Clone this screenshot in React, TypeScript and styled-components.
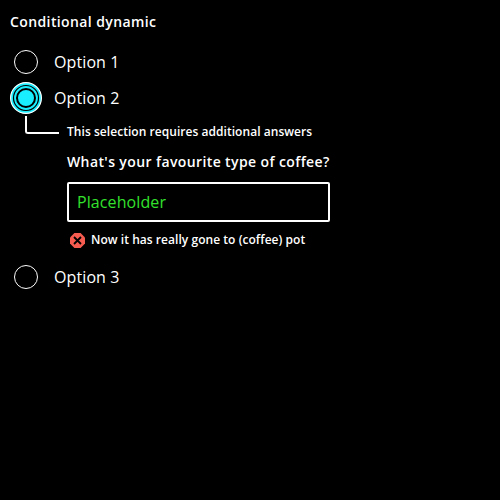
import React from "react";
import styled, { createGlobalStyle } from "styled-components";

const GlobalStyle = createGlobalStyle`
  html, body { margin: 0; background: #000; color: #fff; }
  * { box-sizing: border-box; }
  body { font-family: "Open Sans", sans-serif; }
`;

const Fieldset = styled.fieldset`
  border: 0;
  margin: 0;
  padding: 10px;
`;

const Legend = styled.legend`
  float: left;
  width: 100%;
  padding: 0;
  margin-bottom: 12px;
  font-size: 14px;
  line-height: 24px;
  font-weight: 600;
  letter-spacing: 0.39px;
`;

const Option = styled.label`
  display: flex;
  clear: both;
  align-items: center;
  gap: 12px;
  height: 32px;
  margin-bottom: 4px;
  font-size: 16px;
  line-height: 24px;
  letter-spacing: 0.1px;
`;

const RadioIcon = styled.svg`
  display: block;
  width: 32px;
  height: 32px;
`;

const Conditional = styled.div`
  display: flex;
  margin-bottom: 11px;
`;

const Branch = styled.div`
  width: 34px;
  height: 18px;
  margin-left: 15px;
  margin-top: -2px;
  border: solid #fff;
  border-width: 0 0 2px 2px;
  border-bottom-left-radius: 3px;
`;

const Content = styled.div`
  width: 263px;
  margin-left: 8px;
`;

const Hint = styled.div`
  margin-top: 4px;
  font-size: 12px;
  line-height: 20px;
  font-weight: 600;
  letter-spacing: 0.045px;
`;

const Question = styled.label`
  display: block;
  margin: 8px 0;
  font-size: 14px;
  line-height: 24px;
  font-weight: 600;
  letter-spacing: 0.39px;
  white-space: nowrap;
`;

const TextInput = styled.input`
  display: block;
  width: 100%;
  height: 40px;
  padding: 0 8px;
  border: 2px solid #fff;
  border-radius: 2px;
  background: #000;
  color: #fff;
  font: 16px/24px "Open Sans", sans-serif;
  letter-spacing: 0.1px;
  &::placeholder { color: #33e12d; opacity: 1; }
`;

const ErrorText = styled.div`
  display: flex;
  align-items: center;
  gap: 6px;
  margin: 8px 0 0 3px;
  font-size: 12px;
  line-height: 20px;
  font-weight: 600;
  letter-spacing: 0.045px;
`;

function Radio({ label, checked = false }: { label: string; checked?: boolean }) {
  return (
    <Option>
      <RadioIcon viewBox="0 0 32 32">
        {checked ? (
          <>
            <circle cx="16" cy="16" r="15.4" fill="#19eeff" stroke="#fff" strokeWidth="1.2" />
            <circle cx="16" cy="16" r="12.5" fill="#19eeff" stroke="#000" strokeWidth="1.2" />
            <circle cx="16" cy="16" r="9" fill="#19eeff" stroke="#000" strokeWidth="2" />
          </>
        ) : (
          <circle cx="16" cy="16" r="11.5" fill="#000" stroke="#fff" />
        )}
      </RadioIcon>
      {label}
    </Option>
  );
}

export default function App() {
  return (
    <>
      <GlobalStyle />
      <Fieldset>
        <Legend>Conditional dynamic</Legend>
        <Radio label="Option 1" />
        <Radio label="Option 2" checked />
        <Conditional>
          <Branch />
          <Content>
            <Hint>This selection requires additional answers</Hint>
            <Question htmlFor="coffee">What's your favourite type of coffee?</Question>
            <TextInput id="coffee" placeholder="Placeholder" />
            <ErrorText>
              <svg width="15" height="15" viewBox="0 0 15 15">
                <path d="M4.4 0h6.2L15 4.4v6.2L10.6 15H4.4L0 10.6V4.4z" fill="#f65b50" />
                <path d="M4 4l7 7M11 4l-7 7" stroke="#000" strokeWidth="1.8" />
              </svg>
              Now it has really gone to (coffee) pot
            </ErrorText>
          </Content>
        </Conditional>
        <Radio label="Option 3" />
      </Fieldset>
    </>
  );
}
